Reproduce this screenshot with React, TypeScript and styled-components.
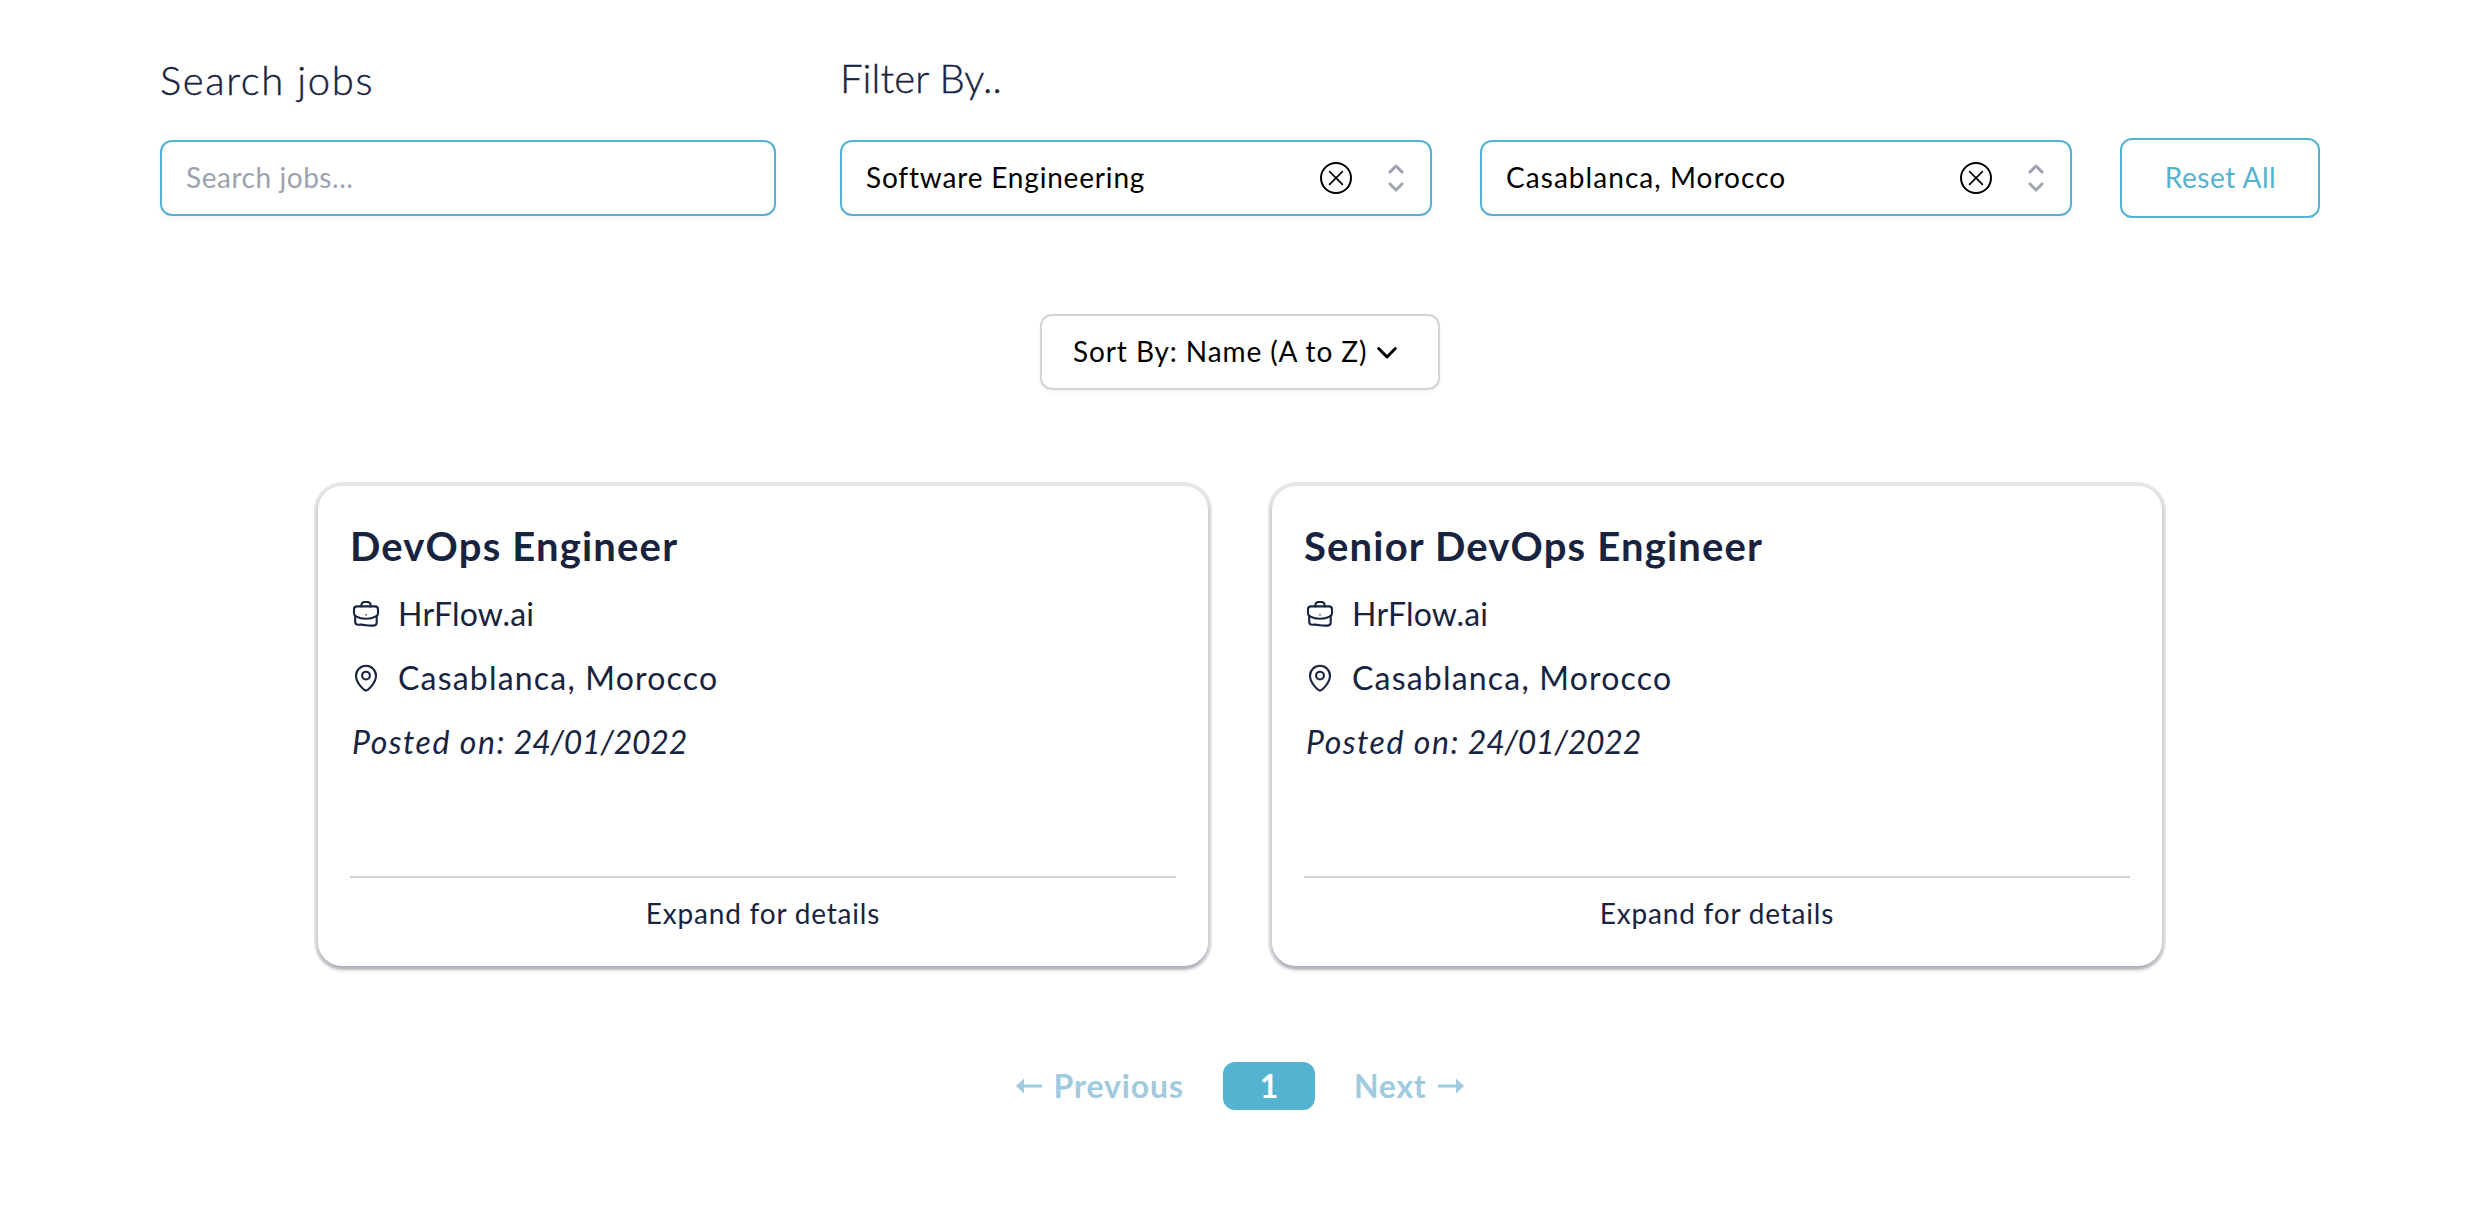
import React from "react";
import styled, { createGlobalStyle } from "styled-components";

const ACCENT = "#54b3d0";
const NAVY = "#18243f";

const Global = createGlobalStyle`
  * { box-sizing: border-box; }
  body { margin: 0; background: #fff; color: ${NAVY}; font-family: Lato, "Open Sans", sans-serif; }
  button, input { font-family: inherit; }
  svg { display: block; flex: none; }
`;

const Page = styled.main`
  display: flex;
  flex-direction: column;
  height: 1218px;
  overflow: hidden;
`;

const Toolbar = styled.section`
  display: flex;
  gap: 64px;
  height: 218px;
  padding: 52px 160px 0;
`;

const Group = styled.div`
  display: flex;
  flex-direction: column;
`;

const Label = styled.h2<{ $space: number; $top: number }>`
  margin: 0;
  height: 86px;
  padding-top: ${(p) => p.$top}px;
  font-size: 40px;
  font-weight: 300;
  line-height: 50px;
  letter-spacing: ${(p) => p.$space}px;
  -webkit-text-stroke: 0.4px ${NAVY};
`;

const SearchField = styled.input`
  width: 616px;
  height: 76px;
  margin-top: 2px;
  padding: 0 24px 2px;
  border: 2px solid ${ACCENT};
  border-radius: 12px;
  outline: none;
  box-shadow: 0 2px 4px rgba(0, 0, 0, 0.05);
  font-size: 28px;
  letter-spacing: 0.55px;
  &::placeholder { color: #9ca3af; opacity: 1; }
`;

const Controls = styled.div`
  display: flex;
  align-items: center;
  gap: 48px;
  height: 80px;
`;

const Select = styled.div`
  display: flex;
  align-items: center;
  width: 592px;
  height: 76px;
  padding: 0 14px 0 24px;
  border: 2px solid ${ACCENT};
  border-radius: 12px;
  box-shadow: 0 2px 4px rgba(0, 0, 0, 0.05);
  color: #000;
`;

const Value = styled.span<{ $space: number }>`
  flex: 1;
  padding-bottom: 2px;
  font-size: 28px;
  line-height: 40px;
  letter-spacing: ${(p) => p.$space}px;
  text-align: left;
  white-space: nowrap;
`;

const IconPair = styled.span`
  display: flex;
  align-items: center;
  gap: 23px;
`;

const ResetButton = styled.button`
  width: 200px;
  height: 80px;
  padding: 0 0 2px 1px;
  border: 2px solid ${ACCENT};
  border-radius: 12px;
  background: #fff;
  color: ${ACCENT};
  font-size: 28px;
  letter-spacing: 0.55px;
`;

const SortButton = styled.button`
  display: flex;
  align-items: center;
  align-self: center;
  width: 400px;
  height: 76px;
  margin: 96px 4px 0 0;
  padding: 0 32px 0 31px;
  border: 2px solid #d1d5db;
  border-radius: 12px;
  background: #fff;
  box-shadow: 0 2px 4px rgba(0, 0, 0, 0.05);
  color: #000;
  & > svg { margin-top: 2px; }
`;

const Cards = styled.section`
  display: grid;
  grid-template-columns: 890px 890px;
  gap: 64px;
  margin: 96px 0 0 318px;
`;

const Card = styled.article`
  display: flex;
  flex-direction: column;
  height: 480px;
  padding: 34px 32px 0;
  border-radius: 24px;
  background: #fff;
  box-shadow:
    0 0 0 4px rgba(17, 24, 39, 0.1),
    0 3px 5px rgba(17, 24, 55, 0.18),
    0 4px 4px -1px rgba(17, 24, 55, 0.16);
`;

const Title = styled.h3<{ $space: number }>`
  margin: 0;
  font-size: 40px;
  font-weight: 700;
  line-height: 53px;
  letter-spacing: ${(p) => p.$space}px;
`;

const MetaList = styled.div`
  padding-top: 9px;
`;

const Meta = styled.p<{ $space: number; $italic?: boolean }>`
  display: flex;
  align-items: center;
  gap: ${(p) => (p.$italic ? 8 : 18)}px;
  height: 64px;
  margin: 0;
  padding-left: 2px;
  font-size: 32px;
  font-style: ${(p) => (p.$italic ? "italic" : "normal")};
  line-height: 44px;
  letter-spacing: ${(p) => p.$space}px;
`;

const PostedDate = styled.time`
  letter-spacing: -0.2px;
`;

const Expand = styled.button`
  width: 100%;
  height: 72px;
  margin-top: auto;
  margin-bottom: 18px;
  padding: 0;
  border: 0;
  border-top: 2px solid #d1d5db;
  background: none;
  color: ${NAVY};
  font-size: 28px;
  line-height: 70px;
  letter-spacing: 0.8px;
`;

const Pagination = styled.nav`
  display: flex;
  align-items: center;
  height: 48px;
  margin: 96px 0 0 1016px;
  color: #a0cbdf;
  font-size: 32px;
  font-weight: 700;
`;

const PageLink = styled.span<{ $width: number; $space: number }>`
  display: flex;
  align-items: center;
  justify-content: space-between;
  width: ${(p) => p.$width}px;
  letter-spacing: ${(p) => p.$space}px;
  line-height: 48px;
`;

const Current = styled.span`
  width: 92px;
  height: 48px;
  margin: 0 39px;
  border-radius: 12px;
  background: ${ACCENT};
  color: #fff;
  line-height: 48px;
  text-align: center;
`;

const ClearIcon = () => (
  <svg width="34" height="34" viewBox="0 0 34 34" fill="none" stroke="#000" strokeLinecap="round">
    <circle cx="17" cy="17" r="15" strokeWidth="2" />
    <path d="M10.6 10.6l12.8 12.8M23.4 10.6L10.6 23.4" strokeWidth="1.7" />
  </svg>
);

const SelectorIcon = () => (
  <svg width="40" height="40" viewBox="0 0 20 20" fill="none" stroke="#9ca3af" strokeWidth="1.5" strokeLinecap="round" strokeLinejoin="round">
    <path d="M7 7l3-3 3 3m0 6l-3 3-3-3" />
  </svg>
);

const ChevronIcon = () => (
  <svg width="40" height="40" viewBox="0 0 40 40" fill="none" stroke="#000" strokeWidth="3" strokeLinecap="round" strokeLinejoin="round">
    <path d="M11.700 15.500L20 24l8.300-8.500" />
  </svg>
);

const BriefcaseIcon = () => (
  <svg width="28" height="28" viewBox="0 0 28 28" fill="none" stroke={NAVY} strokeWidth="2.1" strokeLinecap="round" strokeLinejoin="round">
    <path d="M9.2 6.4C9.3 3.4 10.4 2 12.6 2h2.8c2.2 0 3.3 1.4 3.4 4.4" />
    <path d="M5 6.4h18q3 0 3 3v3.8q0 2.2-2 3.1Q19.5 18.8 14 18.8T4 16.3q-2-.9-2-3.1V9.4q0-3 3-3z" />
    <path d="M3.2 16.2v5.6q0 3 3 3c2.800-.5 5-.2 7.800.4s3.700.4 7.700.4q3 0 3-3v-6.400" />
    <path d="M14 14.6v.4" strokeWidth="1.4" />
  </svg>
);

const PinIcon = () => (
  <svg width="28" height="28" viewBox="0 0 28 28" fill="none" stroke={NAVY} strokeWidth="2.1">
    <path d="M14 26.6C12.7 26.6 4 19.6 4 11.8a10 10 0 0120 0C24 19.6 15.3 26.600 14 26.600z" />
    <circle cx="14" cy="11.6" r="3.9" />
  </svg>
);

const ArrowIcon = ({ right }: { right?: boolean }) => (
  <svg width="26" height="16" viewBox="0 0 26 16" fill="#a0cbdf">
    <path d={right ? "M26 8l-8-7.5V6.4H0v3.2h18v5.900z" : "M0 8l8-7.5V6.4h18v3.2H8v5.900z"} />
  </svg>
);

const filters = [
  { label: "Software Engineering", space: 0.82 },
  { label: "Casablanca, Morocco", space: 1.05 },
];

const jobs = ["DevOps Engineer", "Senior DevOps Engineer"];

export default function App() {
  return (
    <Page>
      <Global />
      <Toolbar>
        <Group>
          <Label $space={1.6} $top={3}>Search jobs</Label>
          <SearchField placeholder="Search jobs..." />
        </Group>
        <Group>
          <Label $space={0.1} $top={1}>Filter By..</Label>
          <Controls>
            {filters.map((f) => (
              <Select key={f.label}>
                <Value $space={f.space}>{f.label}</Value>
                <IconPair>
                  <ClearIcon />
                  <SelectorIcon />
                </IconPair>
              </Select>
            ))}
            <ResetButton>Reset All</ResetButton>
          </Controls>
        </Group>
      </Toolbar>
      <SortButton>
        <Value $space={0.9}>Sort By: Name (A to Z)</Value>
        <ChevronIcon />
      </SortButton>
      <Cards>
        {jobs.map((job) => (
          <Card key={job}>
            <Title $space={1.17}>{job}</Title>
            <MetaList>
              <Meta $space={0.2}><BriefcaseIcon />HrFlow.ai</Meta>
              <Meta $space={1.2}><PinIcon />Casablanca, Morocco</Meta>
              <Meta $space={1.5} $italic>
                <span>Posted on:</span>
                <PostedDate>24/01/2022</PostedDate>
              </Meta>
            </MetaList>
            <Expand>Expand for details</Expand>
          </Card>
        ))}
      </Cards>
      <Pagination>
        <PageLink $width={168} $space={0.9}><ArrowIcon />Previous</PageLink>
        <Current>1</Current>
        <PageLink $width={110} $space={0.7}>Next<ArrowIcon right /></PageLink>
      </Pagination>
    </Page>
  );
}
